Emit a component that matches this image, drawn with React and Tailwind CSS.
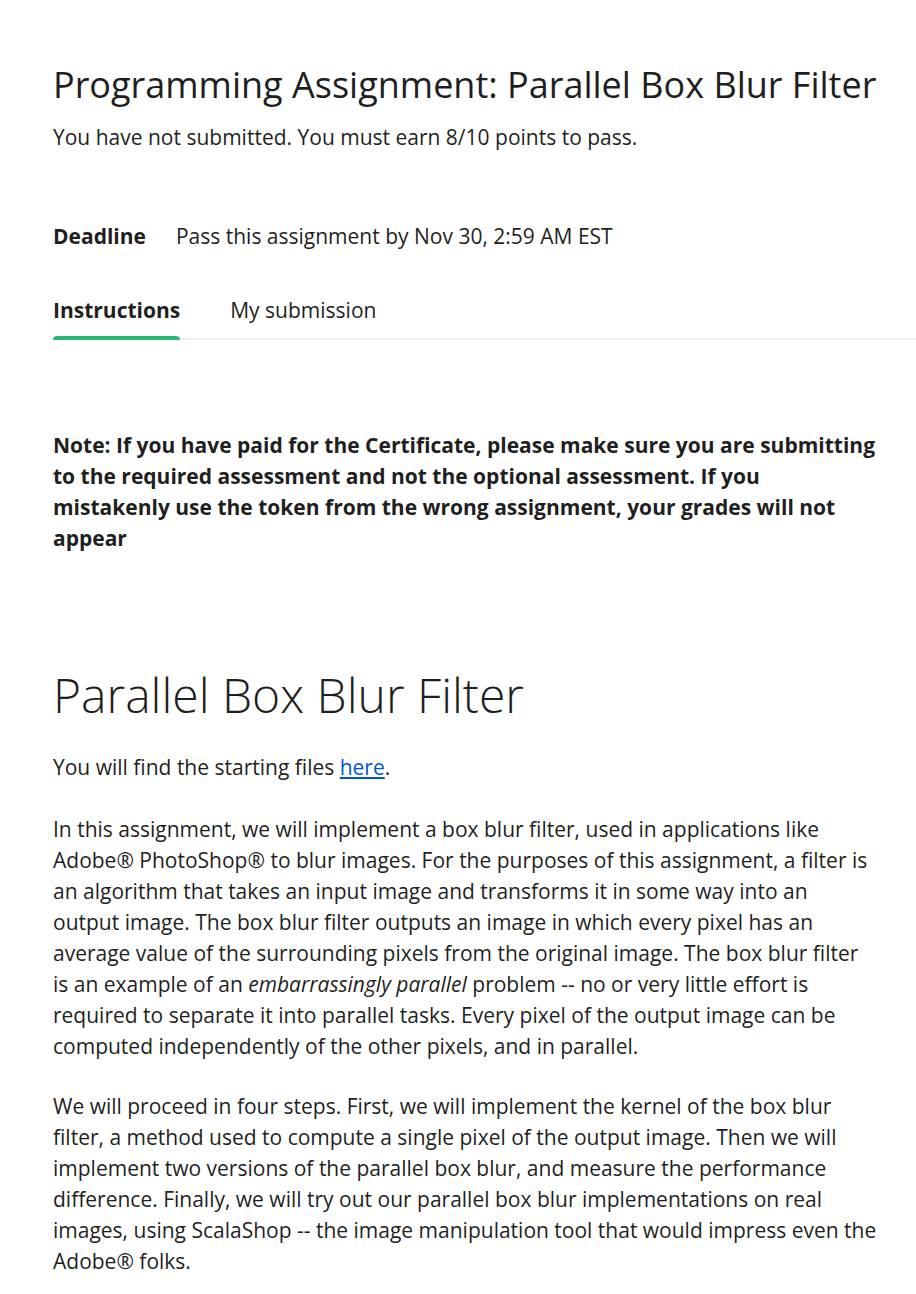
export default function App() {
  return (
    <div className="min-h-screen bg-white text-[#1f1f1f] font-['Open_Sans',sans-serif]">
      <div className="pl-[53px] pt-[62px]">
        {/* Header */}
        <div className="pr-[38px]">
          <h1 className="text-[36px] leading-[46px] font-normal whitespace-nowrap">
            Programming Assignment: Parallel Box Blur Filter
          </h1>
          <p className="mt-[14px] text-[21px] leading-[31px]">
            You have not submitted. You must earn 8/10 points to pass.
          </p>

          <div className="mt-[68px] flex items-center text-[21px] leading-[31px]">
            <span className="font-bold">Deadline</span>
            <span className="ml-[30px]">Pass this assignment by Nov 30, 2:59 AM EST</span>
          </div>
        </div>

        {/* Tabs */}
        <div className="mt-[43px] flex items-end border-b-2 border-[#f0f0f0] gap-[50px]">
          <div className="relative pb-[12px] text-[21px] leading-[31px] font-bold">
            Instructions
            <span className="absolute left-0 right-0 -bottom-[2px] h-[4px] rounded-t-sm bg-[#2ab673]" />
          </div>
          <div className="pb-[12px] text-[21px] leading-[31px]">My submission</div>
        </div>

        {/* Content */}
        <div className="pr-[38px] text-[21px] leading-[31px]">
          <p className="mt-[90px] font-bold">
            Note: If you have paid for the Certificate, please make sure you are submitting to the required assessment and not the optional assessment. If you mistakenly use the token from the wrong assignment, your grades will not appear
          </p>

          <h2 className="mt-[111px] text-[48px] leading-[60px] font-light">Parallel Box Blur Filter</h2>

          <p className="mt-[27px]">
            You will find the starting files{" "}
            <a href="#" className="text-[#0056d2] underline underline-offset-2">here</a>.
          </p>

          <p className="mt-[31px]">
            In this assignment, we will implement a box blur filter, used in applications like Adobe® PhotoShop® to blur images. For the purposes of this assignment, a filter is an algorithm that takes an input image and transforms it in some way into an output image. The box blur filter outputs an image in which every pixel has an average value of the surrounding pixels from the original image. The box blur filter is an example of an <em>embarrassingly parallel</em> problem -- no or very little effort is required to separate it into parallel tasks. Every pixel of the output image can be computed independently of the other pixels, and in parallel.
          </p>

          <p className="mt-[29px]">
            We will proceed in four steps. First, we will implement the kernel of the box blur filter, a method used to compute a single pixel of the output image. Then we will implement two versions of the parallel box blur, and measure the performance difference. Finally, we will try out our parallel box blur implementations on real images, using ScalaShop -- the image manipulation tool that would impress even the Adobe® folks.
          </p>
        </div>
      </div>
    </div>
  );
}
